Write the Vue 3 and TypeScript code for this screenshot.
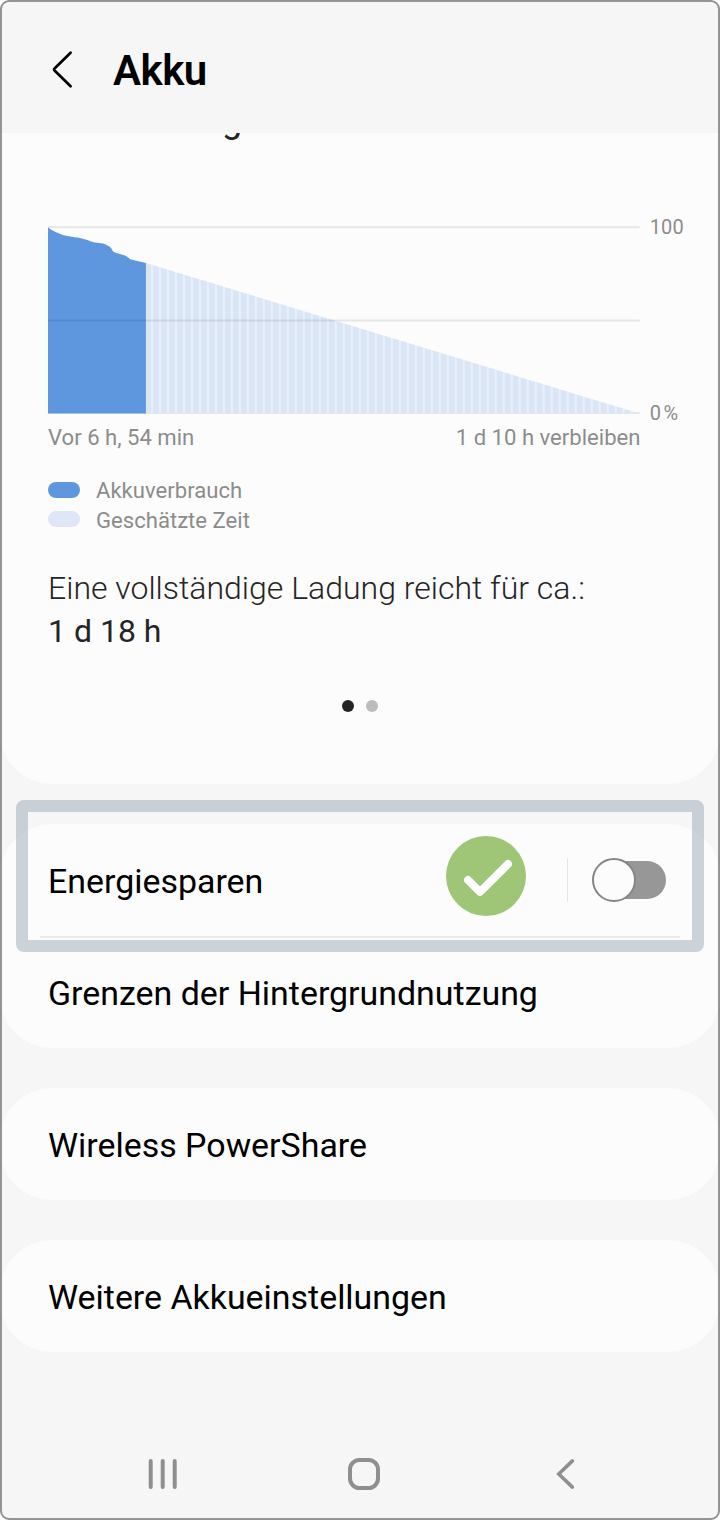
<script setup lang="ts">
interface SettingsRow {
  label: string
  hasSwitch?: boolean
}

const groups: SettingsRow[][] = [
  [{ label: 'Energiesparen', hasSwitch: true }, { label: 'Grenzen der Hintergrundnutzung' }],
  [{ label: 'Wireless PowerShare' }],
  [{ label: 'Weitere Akkueinstellungen' }],
]

const gridLines: number[] = [9.3, 102.5]
</script>

<template>
  <div class="phone">
    <header class="header">
      <svg class="back" width="28" height="44" viewBox="0 0 28 44">
        <path d="M22.6 4.8 L6.8 20.2 Q5.4 21.5 6.8 22.8 L22.6 38.2" />
      </svg>
      <h1>Akku</h1>
    </header>

    <main>
      <section class="card usage">
        <div class="scrolled"><span>g</span></div>
        <div class="chart">
          <svg width="592" height="200" viewBox="0 0 592 200">
            <defs>
              <pattern id="stripes" x="7" y="0" width="8" height="200" patternUnits="userSpaceOnUse">
                <rect width="8" height="200" fill="#dae5f5" />
                <rect x="0" width="2" height="200" fill="#e8f0fa" />
              </pattern>
            </defs>
            <line x1="0" x2="592" y1="195" y2="195" class="grid-line" />
            <path d="M98 45 L590 195 H98Z" fill="url(#stripes)" />
            <path
              d="M0 9.5 C4 13 10 15 15 17 C23 19 31 19.5 36 21 C41 22 43 24 47 24.4 L55 25.5 C59 27 62 28.5 63 30 C65 32 64 33.5 67 34.4 L77 37.5 C80 38.5 80 40.5 84 41.7 L98 45 V195.5 H0Z"
              fill="#5f97df"
            />
            <line v-for="y in gridLines" :key="y" x1="0" x2="592" :y1="y" :y2="y" class="grid-line" />
          </svg>
          <div class="scale"><span>100</span><span class="percent">0&#8201;%</span></div>
        </div>
        <div class="times"><span>Vor 6 h, 54 min</span><span>1 d 10 h verbleiben</span></div>
        <ul class="legend">
          <li><i class="swatch used"></i><span>Akkuverbrauch</span></li>
          <li><i class="swatch estimated"></i><span>Geschätzte Zeit</span></li>
        </ul>
        <div class="full-charge">
          <p class="light">Eine vollständige Ladung reicht für ca.:</p>
          <p>1 d 18 h</p>
        </div>
        <div class="dots"><i class="dot active"></i><i class="dot"></i></div>
      </section>

      <section v-for="(group, g) in groups" :key="g" class="card">
        <div v-for="row in group" :key="row.label" class="row">
          <span class="label">{{ row.label }}</span>
          <template v-if="row.hasSwitch">
            <span class="separator"></span>
            <span class="switch"><span class="track"></span><span class="knob"></span></span>
            <span class="highlight"></span>
            <svg class="check" width="80" height="80" viewBox="0 0 80 80">
              <circle cx="40" cy="40" r="40" />
              <path d="M22 44 L34 56 L62 28" />
            </svg>
          </template>
        </div>
      </section>
    </main>

    <nav class="navbar">
      <svg width="32" height="32" viewBox="0 0 32 32">
        <path d="M4.7 3 V29 M16.7 3 V29 M28.7 3 V29" />
      </svg>
      <svg class="home" width="32" height="32" viewBox="0 0 32 32">
        <rect x="2" y="2" width="28" height="28" rx="9.5" />
      </svg>
      <svg width="32" height="32" viewBox="0 0 32 32">
        <path d="M24.4 2.9 L10.8 16 L24.4 29.1" class="nav-back" />
      </svg>
    </nav>
  </div>
</template>

<style scoped>
.phone {
  box-sizing: border-box;
  width: 720px;
  height: 1520px;
  display: flex;
  flex-direction: column;
  overflow: hidden;
  border: 2px solid #949494;
  border-radius: 9px;
  background: #f6f6f6;
  color: #000;
  font-family: Roboto, sans-serif;
}
.header {
  height: 131px;
  flex: none;
  display: flex;
  box-sizing: border-box;
  padding: 46px 0 0 46px;
}
.back {
  fill: none;
  stroke: #000;
  stroke-width: 2.7;
  stroke-linecap: round;
  stroke-linejoin: round;
}
h1 {
  margin: -1px 0 0 37px;
  font-size: 42px;
  line-height: 48px;
  font-weight: 600;
  letter-spacing: -0.5px;
}
main {
  display: flex;
  flex-direction: column;
  gap: 40px;
  margin: 0 -2px;
}
.card {
  border-radius: 52px;
  background: #fcfcfc;
}
.usage {
  box-sizing: border-box;
  height: 651px;
  padding: 0 36px 0 48px;
  border-radius: 0 0 52px 52px;
  color: #252525;
}
.scrolled {
  display: flex;
  align-items: flex-end;
  height: 8px;
  overflow: hidden;
  padding-left: 174px;
  font-size: 36px;
  line-height: 42px;
}
.chart {
  display: flex;
  margin-top: 77px;
}
.grid-line {
  stroke: rgba(0, 0, 0, 0.085);
  stroke-width: 2;
}
.scale {
  display: flex;
  flex-direction: column;
  justify-content: space-between;
  height: 210px;
  margin: -3px 0 -7px 10px;
  color: #8c8c8c;
  font-size: 20px;
  line-height: 24px;
  letter-spacing: 0.2px;
  white-space: nowrap;
}
.percent {
  letter-spacing: -0.7px;
}
.times {
  display: flex;
  justify-content: space-between;
  width: 592.5px;
  margin-top: 6px;
  color: #8c8c8c;
  font-size: 22.1px;
  line-height: 26px;
}
.legend {
  list-style: none;
  margin: 25px 0 0;
  padding: 0;
  color: #8c8c8c;
  font-size: 22.1px;
  line-height: 29.5px;
}
.legend li {
  display: flex;
  align-items: center;
  gap: 16px;
}
.legend li + li span {
  padding-top: 1px;
  margin-bottom: -1px;
}
.swatch {
  width: 32px;
  height: 16px;
  border-radius: 8px;
}
.used {
  background: #5f97df;
}
.estimated {
  background: #dfe6f7;
}
.legend span {
  position: relative;
  top: 0.8px;
}
.full-charge {
  margin-top: 33px;
  font-size: 32px;
  line-height: 43px;
}
.full-charge p {
  margin: 0;
}
.light {
  font-weight: 300;
}
.dots {
  display: flex;
  justify-content: center;
  gap: 12px;
  margin: 47px -36px 0 -48px;
}
.dot {
  width: 12px;
  height: 12px;
  border-radius: 50%;
  background: #bdbdbd;
}
.active {
  background: #252525;
}
.row {
  position: relative;
  box-sizing: border-box;
  height: 112px;
  display: flex;
  align-items: center;
  padding: 0 54px 0 48px;
}
.row + .row::before {
  content: '';
  position: absolute;
  top: 0;
  left: 40px;
  right: 40px;
  height: 2px;
  background: #e9e9e9;
}
.label {
  flex: 1;
  padding-top: 3px;
  font-size: 33.92px;
  line-height: 40px;
}
.separator {
  width: 1.5px;
  height: 44px;
  margin-right: 24px;
  background: #e6e6e6;
}
.switch {
  position: relative;
  width: 74px;
  height: 44px;
}
.track {
  position: absolute;
  inset: 3px 0 3px 8px;
  border-radius: 19px;
  background: #979797;
}
.knob {
  position: absolute;
  left: 0;
  top: 0;
  box-sizing: border-box;
  width: 44px;
  height: 44px;
  border: 2px solid #858585;
  border-radius: 50%;
  background: #fcfcfc;
}
.highlight {
  position: absolute;
  z-index: 1;
  top: -24px;
  left: 16px;
  right: 16px;
  box-sizing: border-box;
  height: 152px;
  border: 12px solid rgba(154, 170, 182, 0.5);
  border-radius: 8px;
}
.check {
  position: absolute;
  z-index: 2;
  left: 446px;
  top: 12px;
}
.check circle {
  fill: #9fc577;
}
.check path {
  fill: none;
  stroke: #fff;
  stroke-width: 8;
  stroke-linecap: round;
  stroke-linejoin: round;
}
.navbar {
  display: flex;
  justify-content: space-between;
  margin-top: 106px;
  padding: 0 138px 0 144px;
}
.navbar svg {
  fill: none;
  stroke: #8f8f8f;
  stroke-width: 4;
  stroke-linecap: round;
}
.navbar .home {
  margin-left: 2px;
}
.navbar .nav-back {
  stroke-width: 3.6;
}
</style>
